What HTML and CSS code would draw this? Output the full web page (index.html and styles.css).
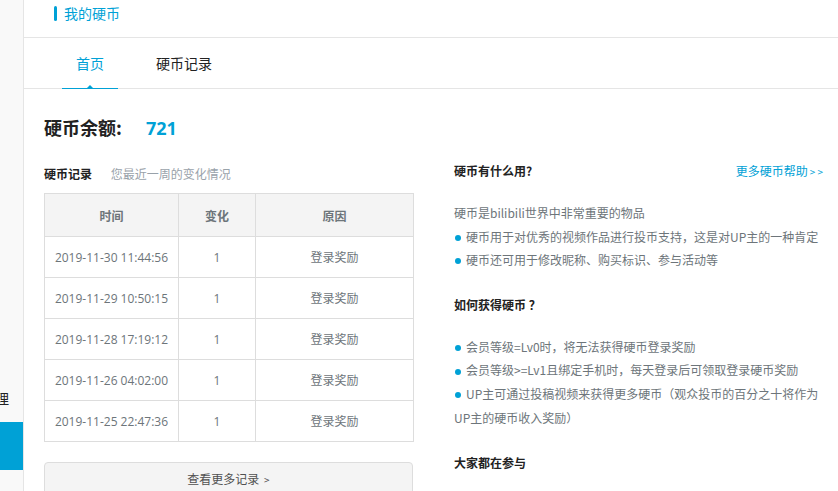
FILE: index.html
```html
<!DOCTYPE html>
<html lang="zh-CN">
<head>
<meta charset="utf-8">
<title>我的硬币</title>
<link rel="stylesheet" href="styles.css">
</head>
<body>
<aside class="sidebar">
  <div class="side-item"><span>硬币管理</span></div>
  <div class="side-item active"><span>我的硬币</span></div>
</aside>
<main class="main">
  <header class="page-header">
    <span class="header-bar"></span>
    <span class="header-title">我的硬币</span>
  </header>
  <nav class="tabs">
    <a class="tab active">首页</a>
    <a class="tab">硬币记录</a>
  </nav>
  <section class="content">
    <div class="balance">
      <span class="balance-label">硬币余额:</span>
      <span class="balance-value">721</span>
    </div>
    <div class="columns">
      <div class="col-left">
        <div class="sub-title">
          <span class="sub-main">硬币记录</span>
          <span class="sub-desc">您最近一周的变化情况</span>
        </div>
        <table class="record-table">
          <colgroup>
            <col class="c-time">
            <col class="c-change">
            <col class="c-reason">
          </colgroup>
          <thead>
            <tr><th>时间</th><th>变化</th><th>原因</th></tr>
          </thead>
          <tbody>
            <tr><td>2019-11-30 11:44:56</td><td>1</td><td>登录奖励</td></tr>
            <tr><td>2019-11-29 10:50:15</td><td>1</td><td>登录奖励</td></tr>
            <tr><td>2019-11-28 17:19:12</td><td>1</td><td>登录奖励</td></tr>
            <tr><td>2019-11-26 04:02:00</td><td>1</td><td>登录奖励</td></tr>
            <tr><td>2019-11-25 22:47:36</td><td>1</td><td>登录奖励</td></tr>
          </tbody>
        </table>
        <div class="more-btn">查看更多记录 <span class="gt">&gt;</span></div>
      </div>
      <div class="col-right">
        <div class="help-head">
          <span class="help-title">硬币有什么用?</span>
          <a class="help-link">更多硬币帮助<span class="arrows">&gt; &gt;</span></a>
        </div>
        <div class="help-block first">
          <p class="line">硬币是bilibili世界中非常重要的物品</p>
          <p class="line"><i class="dot"></i>硬币用于对优秀的视频作品进行投币支持，这是对UP主的一种肯定</p>
          <p class="line"><i class="dot"></i>硬币还可用于修改昵称、购买标识、参与活动等</p>
        </div>
        <div class="help-title block-title">如何获得硬币 ？</div>
        <div class="help-block second">
          <p class="line"><i class="dot"></i>会员等级=Lv0时，将无法获得硬币登录奖励</p>
          <p class="line"><i class="dot"></i>会员等级&gt;=Lv1且绑定手机时，每天登录后可领取登录硬币奖励</p>
          <p class="line"><i class="dot"></i>UP主可通过投稿视频来获得更多硬币（观众投币的百分之十将作为UP主的硬币收入奖励）</p>
        </div>
        <div class="help-title block-title last">大家都在参与</div>
      </div>
    </div>
  </section>
</main>
</body>
</html>
```
FILE: styles.css
```css
* { box-sizing: border-box; }
html, body { margin: 0; padding: 0; }
body {
  width: 838px;
  height: 491px;
  overflow: hidden;
  display: flex;
  background: #fff;
  font-family: "Open Sans", "Noto Sans CJK SC", sans-serif;
  font-size: 12px;
  color: #6d757a;
}
.sidebar {
  width: 24px;
  flex: none;
  background: #f9f9f9;
  border-right: 1px solid #e5e5e5;
  overflow: hidden;
  padding-top: 374px;
  display: flex;
  flex-direction: column;
}
.side-item {
  height: 48px;
  display: flex;
  justify-content: flex-end;
  align-items: center;
  padding-right: 14px;
  font-size: 14px;
  color: #222;
  white-space: nowrap;
  font-family: "Noto Sans CJK SC", sans-serif;
}
.side-item.active {
  background: #00a1d6;
  color: #fff;
  padding-right: 30px;
}
.main { flex: 1; min-width: 0; }
.page-header {
  height: 38px;
  border-bottom: 1px solid #e5e5e5;
  display: flex;
  align-items: flex-start;
  padding: 6px 0 0 30px;
}
.header-bar {
  width: 3px;
  height: 15px;
  border-radius: 2px;
  background: #00a1d6;
  margin-right: 7px;
}
.header-title {
  font-size: 14px;
  line-height: 15px;
  color: #00a1d6;
  font-family: "Noto Sans CJK SC", sans-serif;
}
.tabs {
  height: 51px;
  border-bottom: 1px solid #e5e5e5;
  display: flex;
  padding-left: 38px;
  gap: 24px;
}
.tab {
  position: relative;
  padding: 0 14px;
  font-size: 14px;
  line-height: 50px;
  color: #222;
  font-family: "Noto Sans CJK SC", sans-serif;
  margin-bottom: -1px;
  border-bottom: 1px solid transparent;
}
.tab.active { color: #00a1d6; border-bottom-color: #00a1d6; }
.tab.active::after {
  content: "";
  position: absolute;
  left: 50%;
  bottom: 0;
  margin-left: -3px;
  border-left: 3px solid transparent;
  border-right: 3px solid transparent;
  border-bottom: 3px solid #00a1d6;
}
.content { padding: 26px 15px 0 20px; }
.balance {
  line-height: 24px;
  font-size: 18px;
  font-weight: bold;
  font-family: "Noto Sans CJK SC", sans-serif;
}
.balance-label { color: #222; margin-right: 20px; }
.balance-value { color: #00a1d6; font-family: "Open Sans", "Noto Sans CJK SC", sans-serif; font-weight: bold; }
.columns {
  display: flex;
  gap: 41px;
  margin-top: 19px;
}
.col-left, .col-right { width: 369px; flex: none; }
.sub-title {
  padding-top: 3px;
  line-height: 24px;
  font-family: "Noto Sans CJK SC", sans-serif;
}
.sub-main { color: #222; font-weight: bold; margin-right: 16px; }
.sub-desc { color: #99a2aa; }
.record-table {
  margin-top: 7px;
  width: 369px;
  border-collapse: collapse;
  table-layout: fixed;
  border: 1px solid #ddd;
}
.c-time { width: 134px; }
.c-change { width: 77px; }
.c-reason { width: 158px; }
.record-table th, .record-table td {
  border: 1px solid #ddd;
  text-align: center;
  padding: 0;
  color: #6d757a;
  font-size: 12px;
}
.record-table th {
  height: 43px;
  background: #f4f4f4;
  font-weight: bold;
  font-family: "Noto Sans CJK SC", sans-serif;
}
.record-table td { height: 41px; }
.more-btn {
  margin-top: 20px;
  height: 34px;
  border: 1px solid #ddd;
  border-radius: 4px;
  background: #f4f4f4;
  text-align: center;
  line-height: 32px;
  color: #505050;
  font-family: "Noto Sans CJK SC", sans-serif;
}
.gt { font-size: 10px; margin-left: 2px; }
.help-head {
  display: flex;
  justify-content: space-between;
  line-height: 24px;
  padding-right: 15px;
  margin-right: -15px;
}
.help-title {
  color: #222;
  font-weight: bold;
  font-family: "Noto Sans CJK SC", sans-serif;
  line-height: 24px;
}
.help-link { color: #00a1d6; font-family: "Noto Sans CJK SC", sans-serif; }
.arrows { font-size: 10px; margin-left: 2px; }
.help-block { font-family: "Noto Sans CJK SC", sans-serif; }
.help-block.first { margin-top: 17px; }
.help-block.second { margin-top: 18px; }
.line { margin: 0; line-height: 23.6px; }
.dot {
  display: inline-block;
  width: 6px;
  height: 6px;
  border-radius: 50%;
  background: #00a1d6;
  margin: 0 5px 1px 1px;
  vertical-align: middle;
}
.block-title { margin-top: 21px; }
.block-title.last { margin-top: 22px; }
```
